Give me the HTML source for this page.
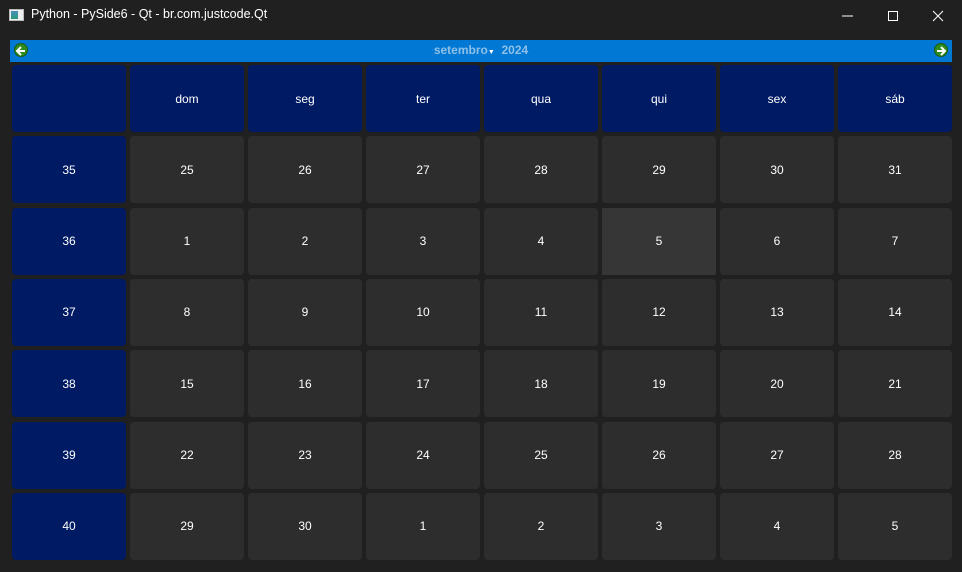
<!DOCTYPE html>
<html><head><meta charset="utf-8"><style>
*{margin:0;padding:0;box-sizing:border-box}
body{width:962px;height:572px;background:#202020;font-family:"Segoe UI","Liberation Sans",sans-serif;overflow:hidden;position:relative;color:#fff}
.title{position:absolute;left:0;top:0;width:962px;height:32px;background:#202020}
.title .t{position:absolute;left:31px;top:7px;font-size:12.5px;color:#fff}
.icon{position:absolute;left:9px;top:9px;width:15px;height:12px;background:#eee;border:1px solid #bbb}
.icon:before{content:"";position:absolute;left:1px;top:1px;width:7px;height:8px;background:linear-gradient(#4a8fbf,#2a9a7a)}
.nav{position:absolute;left:10px;top:40px;width:942px;height:22px;background:#0078d4}
.nav .m{position:absolute;left:0;width:100%;top:3px;text-align:center;font-size:12px;font-weight:bold;color:#8ec0e8}
.arr{position:absolute;top:3px;width:14px;height:14px;border-radius:50%;background:#2e8b1e;border:1px solid #1d5c12}
.grid{position:absolute;left:12px;top:65px;display:grid;grid-template-columns:repeat(8,114px);column-gap:4px;grid-template-rows:repeat(7,67px);row-gap:4.33px}
.grid div{background:#2d2d2d;border-radius:4px;display:flex;align-items:center;justify-content:center;font-size:12px;color:#fff}
.grid .h{background:#001a63}
.grid .s{background:#363636;border-radius:0}
</style></head><body>
<div class="title"><div class="icon"></div><div class="t">Python - PySide6 - Qt - br.com.justcode.Qt</div>
<svg style="position:absolute;left:840px;top:8px" width="110" height="16"><line x1="2" y1="8" x2="13" y2="8" stroke="#fff"/><rect x="48.5" y="3.5" width="9" height="9" fill="none" stroke="#fff"/><path d="M93 3 L103 13 M103 3 L93 13" stroke="#fff"/></svg></div>
<div class="nav">
<div class="arr" style="left:4px"><svg width="12" height="12"><path d="M2 6H10M6 2L2 6L6 10" stroke="#fff" stroke-width="2" fill="none"/></svg></div>
<div class="m">setembro<span style="font-size:7px;color:#fff">▼</span>&nbsp;&nbsp;2024</div>
<div class="arr" style="right:4px"><svg width="12" height="12"><path d="M2 6H10M6 2L10 6L6 10" stroke="#fff" stroke-width="2" fill="none"/></svg></div>
</div>
<div class="grid">
<div class="h"></div><div class="h">dom</div><div class="h">seg</div><div class="h">ter</div><div class="h">qua</div><div class="h">qui</div><div class="h">sex</div><div class="h">sáb</div>
<div class="h">35</div><div>25</div><div>26</div><div>27</div><div>28</div><div>29</div><div>30</div><div>31</div>
<div class="h">36</div><div>1</div><div>2</div><div>3</div><div>4</div><div class="s">5</div><div>6</div><div>7</div>
<div class="h">37</div><div>8</div><div>9</div><div>10</div><div>11</div><div>12</div><div>13</div><div>14</div>
<div class="h">38</div><div>15</div><div>16</div><div>17</div><div>18</div><div>19</div><div>20</div><div>21</div>
<div class="h">39</div><div>22</div><div>23</div><div>24</div><div>25</div><div>26</div><div>27</div><div>28</div>
<div class="h">40</div><div>29</div><div>30</div><div>1</div><div>2</div><div>3</div><div>4</div><div>5</div>
</div>
</body></html>
